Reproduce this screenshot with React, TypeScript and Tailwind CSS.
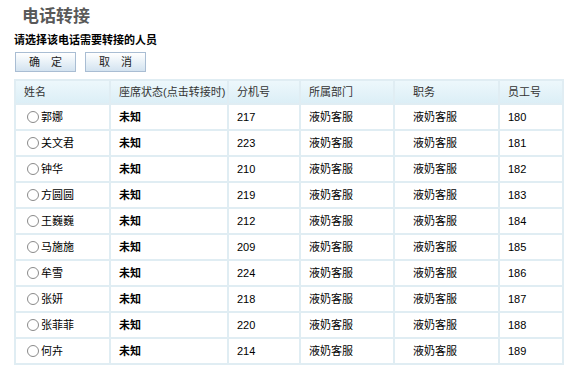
const ROWS = [
  { name: '郭娜', ext: '217', id: '180' },
  { name: '关文君', ext: '223', id: '181' },
  { name: '钟华', ext: '210', id: '182' },
  { name: '方圆圆', ext: '219', id: '183' },
  { name: '王巍巍', ext: '212', id: '184' },
  { name: '马施施', ext: '209', id: '185' },
  { name: '牟雪', ext: '224', id: '186' },
  { name: '张妍', ext: '218', id: '187' },
  { name: '张菲菲', ext: '220', id: '188' },
  { name: '何卉', ext: '214', id: '189' },
];

const HEADERS = ['姓名', '座席状态(点击转接时)', '分机号', '所属部门', '职务', '员工号'];
const COL_W = ['w-[95px]', 'w-[118px]', 'w-[72px]', 'w-[94px]', 'w-[105px]', 'w-[64px]'];
const PAD = ['px-[8px]', 'px-[8px]', 'px-[8px]', 'px-[8px]', 'px-[18px]', 'px-[8px]'];

function Btn({ label }: { label: string }) {
  return (
    <button className="w-[61px] h-[20px] border border-[#a9bdd3] bg-gradient-to-b from-[#ffffff] to-[#d3e3f0] text-[11px] text-[#222] leading-none">
      {label}
    </button>
  );
}

export default function App() {
  return (
    <div
      className="w-[580px] h-[367px] overflow-hidden bg-white text-black"
      style={{ fontFamily: '"Liberation Sans", Arial, "Noto Sans CJK SC", sans-serif' }}
    >
      <div className="pl-[22px] pt-[6px] h-[30px] text-[17px] leading-[22px] text-[#595959] font-bold">电话转接</div>
      <div className="pl-[14px] pt-[3px] h-[22px] text-[11px] leading-[14px] font-bold">请选择该电话需要转接的人员</div>
      <div className="pl-[15px] flex gap-[9px] h-[27px]">
        <Btn label="确　定" />
        <Btn label="取　消" />
      </div>
      <table className="ml-[14px] table-fixed border-collapse text-[11px] w-[549px]">
        <colgroup>
          {COL_W.map((w, i) => (
            <col key={i} className={w} />
          ))}
        </colgroup>
        <thead>
          <tr className="h-[24px] bg-gradient-to-b from-[#eef8fc] to-[#dbeef6]">
            {HEADERS.map((h, i) => (
              <th
                key={i}
                className={`border-2 border-[#e0edf3] text-left font-normal text-[#333] whitespace-nowrap overflow-hidden ${PAD[i]}`}
              >
                {h}
              </th>
            ))}
          </tr>
        </thead>
        <tbody>
          {ROWS.map((r) => (
            <tr key={r.id} className="h-[26px]">
              <td className="border-2 border-[#e0edf3] pl-[11px] whitespace-nowrap">
                <span className="flex items-center gap-[2px]">
                  <span className="inline-block w-[12px] h-[12px] rounded-full border border-[#8a8a8a] bg-white" />
                  <span>{r.name}</span>
                </span>
              </td>
              <td className="border-2 border-[#e0edf3] px-[8px] font-bold">未知</td>
              <td className="border-2 border-[#e0edf3] px-[8px]">{r.ext}</td>
              <td className="border-2 border-[#e0edf3] px-[8px]">液奶客服</td>
              <td className="border-2 border-[#e0edf3] px-[18px]">液奶客服</td>
              <td className="border-2 border-[#e0edf3] px-[8px]">{r.id}</td>
            </tr>
          ))}
        </tbody>
      </table>
    </div>
  );
}
